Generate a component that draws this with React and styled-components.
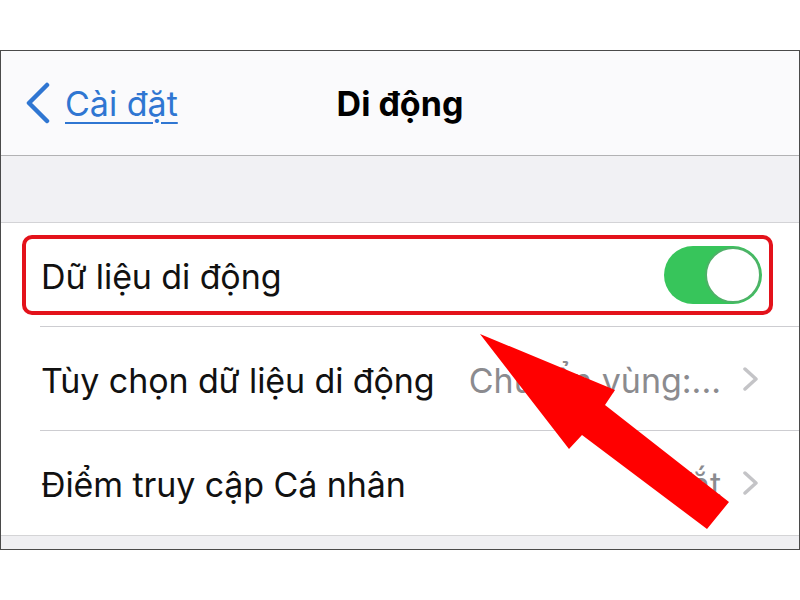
import styled, { createGlobalStyle } from 'styled-components';

const GlobalStyle = createGlobalStyle`
  html, body {
    margin: 0;
    padding: 0;
    background: #ffffff;
  }
  body {
    font-family: Inter, "Noto Sans", "Liberation Sans", sans-serif;
    -webkit-font-smoothing: antialiased;
  }
`;

const Page = styled.div`
  position: relative;
  width: 800px;
  height: 600px;
  padding-top: 50px;
  box-sizing: border-box;
  overflow: hidden;
`;

const Frame = styled.div`
  width: 800px;
  height: 500px;
  box-sizing: border-box;
  border: 1px solid #4a4a4a;
  display: flex;
  flex-direction: column;
  background: #ffffff;
`;

const NavBar = styled.header`
  height: 105px;
  box-sizing: border-box;
  background: #fafafc;
  border-bottom: 1px solid #b2b2b4;
  display: grid;
  grid-template-columns: 1fr auto 1fr;
  align-items: center;
`;

const BackLink = styled.a`
  display: flex;
  align-items: center;
  gap: 14px;
  padding-left: 24px;
  color: #2f76d2;
  font-size: 34px;
  text-decoration: underline;
  text-decoration-thickness: 2px;
  text-underline-offset: 6px;
  cursor: pointer;
`;

const Title = styled.h1`
  margin: 0;
  font-size: 34px;
  font-weight: 700;
  color: #000;
`;

const Spacer = styled.div`
  height: 67px;
  box-sizing: border-box;
  background: #f1f1f4;
  border-bottom: 1px solid #d3d3d6;
`;

const List = styled.div`
  background: #ffffff;
  flex: 1;
  display: flex;
  flex-direction: column;
`;

const Row = styled.div`
  position: relative;
  height: ${p => (p.$last ? '104px' : '103px')};
  display: flex;
  align-items: center;
  padding: 0 40px;
  ${p => !p.$last && `
    &::after {
      content: '';
      position: absolute;
      left: 39px;
      right: 0;
      bottom: -1px;
      height: 1px;
      background: #cdcdd1;
    }
  `}
  & + & {
    margin-top: 1px;
  }
`;

const Label = styled.span`
  font-size: 34px;
  color: #111;
  letter-spacing: -0.1px;
  padding-top: 3px;
`;

const Value = styled.span`
  margin-left: auto;
  font-size: 34px;
  color: #8b8b8f;
  margin-right: 22px;
  padding-top: 3px;
`;

const BottomBand = styled.div`
  height: 14px;
  box-sizing: border-box;
  background: #efeff2;
  border-top: 1px solid #d4d4d6;
`;

const Toggle = styled.div`
  margin-left: auto;
  margin-right: -3px;
  width: 98px;
  height: 58px;
  border-radius: 29px;
  background: #37c55b;
  position: relative;
  &::after {
    content: '';
    position: absolute;
    right: 1px;
    top: 1px;
    width: 52px;
    height: 52px;
    border-radius: 50%;
    background: #ffffff;
    border: 2px solid #4fb168;
  }
`;

const Highlight = styled.div`
  position: absolute;
  left: 21px;
  right: 26px;
  top: 12px;
  height: 80px;
  box-sizing: border-box;
  border: 4px solid #e3121b;
  border-radius: 10px;
  pointer-events: none;
`;

const ArrowLayer = styled.svg`
  position: absolute;
  left: 0;
  top: 0;
  pointer-events: none;
`;

const Chevron = ({ color = '#c4c4c7', w = 16, h = 24, sw = 3.5 }) => (
  <svg width={w} height={h} viewBox={`0 0 ${w} ${h}`} fill="none">
    <path d={`M2 2 L${w - 3} ${h / 2} L2 ${h - 2}`} stroke={color} strokeWidth={sw} strokeLinecap="round" strokeLinejoin="round" />
  </svg>
);

const BackChevron = () => (
  <svg width="26" height="42" viewBox="0 0 26 42" fill="none">
    <path d="M22 3 L4 21 L22 39" stroke="#2f76d2" strokeWidth="4.5" strokeLinecap="round" strokeLinejoin="round" />
  </svg>
);

export default function App() {
  return (
    <>
      <GlobalStyle />
      <Page>
        <Frame>
          <NavBar>
            <BackLink>
              <BackChevron />
              Cài đặt
            </BackLink>
            <Title>Di động</Title>
            <div />
          </NavBar>
          <Spacer />
          <List>
            <Row>
              <Label>Dữ liệu di động</Label>
              <Toggle />
              <Highlight />
            </Row>
            <Row>
              <Label>Tùy chọn dữ liệu di động</Label>
              <Value>Chuyển vùng:...</Value>
              <Chevron />
            </Row>
            <Row $last>
              <Label>Điểm truy cập Cá nhân</Label>
              <Value>Tắt</Value>
              <Chevron />
            </Row>
          </List>
          <BottomBand />
        </Frame>
        <ArrowLayer width="800" height="600" viewBox="0 0 800 600">
          <polygon
            points="480,334 615,390 605,405 729,502 707,529 582,435 569,449"
            fill="#ff0000"
          />
        </ArrowLayer>
      </Page>
    </>
  );
}
